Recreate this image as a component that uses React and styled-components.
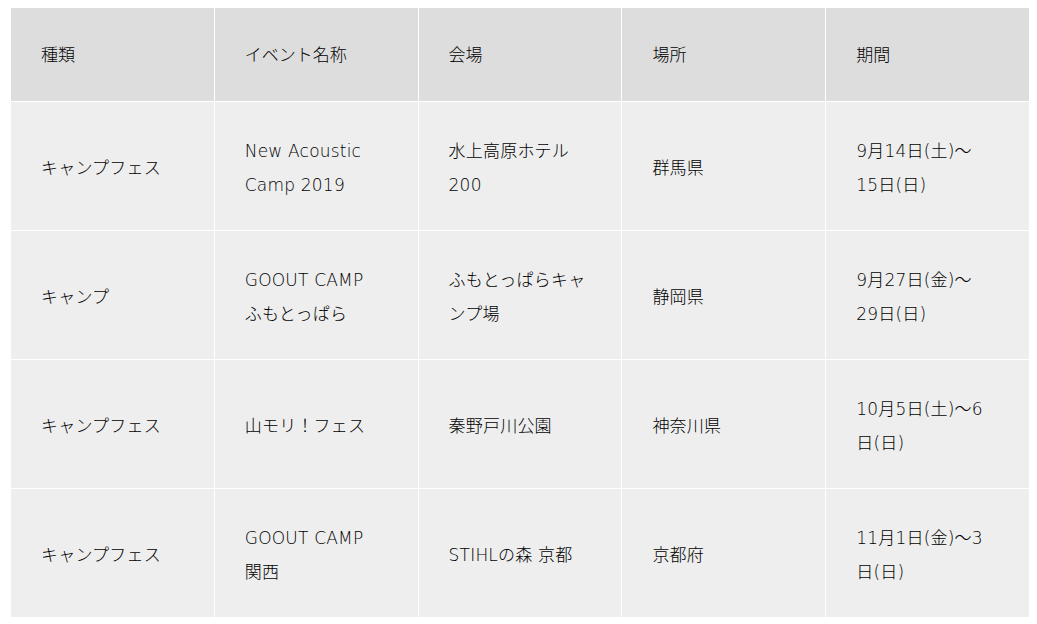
import React from "react";
import styled, { createGlobalStyle } from "styled-components";

const GlobalStyle = createGlobalStyle`
  html, body {
    margin: 0;
    padding: 0;
    background: #ffffff;
  }
  body {
    font-family: "DejaVu Sans", "Noto Sans CJK JP", sans-serif;
  }
`;

const headers = ["種類", "イベント名称", "会場", "場所", "期間"];

// each cell is a list of lines, broken where the original wraps
const events = [
  [["キャンプフェス"], ["New Acoustic", "Camp 2019"], ["水上高原ホテル", "200"], ["群馬県"], ["9月14日(土)～", "15日(日)"]],
  [["キャンプ"], ["GOOUT CAMP", "ふもとっぱら"], ["ふもとっぱらキャ", "ンプ場"], ["静岡県"], ["9月27日(金)～", "29日(日)"]],
  [["キャンプフェス"], ["山モリ！フェス"], ["秦野戸川公園"], ["神奈川県"], ["10月5日(土)～6", "日(日)"]],
  [["キャンプフェス"], ["GOOUT CAMP", "関西"], ["STIHLの森 京都"], ["京都府"], ["11月1日(金)～3", "日(日)"]],
];

const App = () => {
  return (
    <>
      <GlobalStyle />
      <Wrapper>
        <Table>
          <thead>
            <tr>
              {headers.map((h) => (
                <HeadCell key={h}>{h}</HeadCell>
              ))}
            </tr>
          </thead>
          <tbody>
            {events.map((row, i) => (
              <tr key={i}>
                {row.map((lines, j) => (
                  <Cell key={j}>
                    {lines.map((line, k) => (
                      <Line key={k}>{line}</Line>
                    ))}
                  </Cell>
                ))}
              </tr>
            ))}
          </tbody>
        </Table>
      </Wrapper>
    </>
  );
};

const Wrapper = styled.div`
  padding: 7px 0 0 10px;
`;

const Table = styled.table`
  width: 1020px;
  table-layout: fixed;
  border-collapse: collapse;
  font-size: 17px;
  line-height: 34px;
  color: #000000;
`;

const HeadCell = styled.th`
  background-color: #dddddd;
  border: 1px solid #ffffff;
  padding: 30px 30px 29px;
  text-align: left;
  font-weight: 300;
`;

const Cell = styled.td`
  background-color: #eeeeee;
  border: 1px solid #ffffff;
  padding: 32px 30px 28px;
  vertical-align: middle;
  font-weight: 300;
`;

const Line = styled.div`
  white-space: nowrap;
  letter-spacing: 0.2px;
`;

export default App;
